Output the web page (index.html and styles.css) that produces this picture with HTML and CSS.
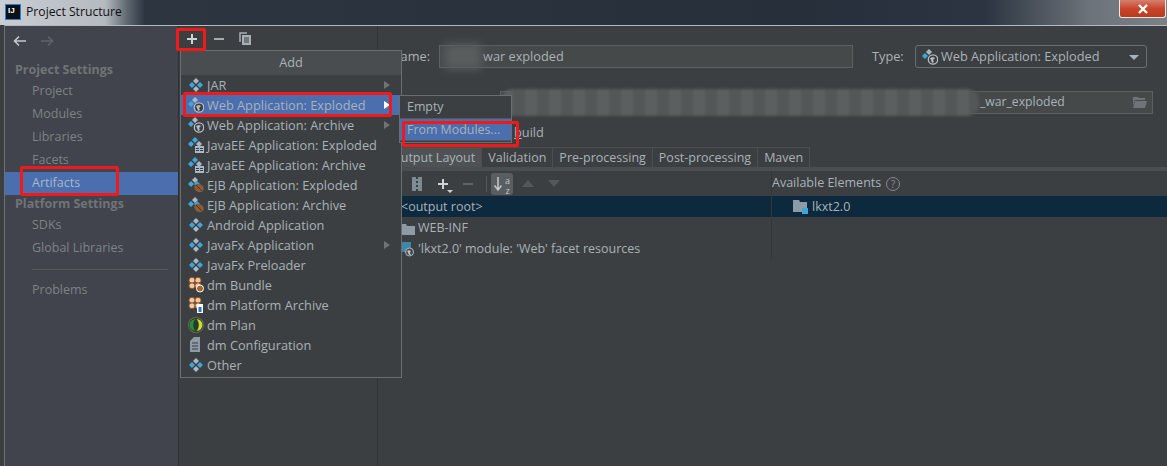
FILE: index.html
```html
<!DOCTYPE html>
<html lang="en">
<head>
<meta charset="utf-8">
<title>Project Structure</title>
<link rel="stylesheet" href="styles.css">
</head>
<body>
<svg class="defs" width="0" height="0" aria-hidden="true">
  <defs>
    <g id="dia">
      <path d="M8 1l3 3-3 3-3-3z" fill="#a9b7c6"/>
      <path d="M4 5l3 3-3 3-3-3z" fill="#3ea6d8"/>
      <path d="M12 5l3 3-3 3-3-3z" fill="#3ea6d8"/>
      <path d="M8 9l3 3-3 3-3-3z" fill="#a9b7c6"/>
    </g>
    <g id="web">
      <path d="M7 0l3 3-3 3-3-3z" fill="#a9b7c6"/>
      <path d="M3 4l3 3-3 3-3-3z" fill="#3ea6d8"/>
      <path d="M8 7l2 2-2 2-2-2z" fill="#3ea6d8"/>
      <circle cx="11" cy="10.500" r="4.700" fill="#3c3f41" stroke="#b5bcc2" stroke-width="1.300"/>
      <path d="M8 9l3-1 2 1-2 2 1 2-2 1-1-3z" fill="#b5bcc2"/>
    </g>
    <g id="ee">
      <path d="M7 0l3 3-3 3-3-3z" fill="#3ea6d8"/>
      <path d="M3 4l3 3-3 3-3-3z" fill="#3ea6d8"/>
      <path d="M11 4l3 3-3 3-3-3z" fill="#a9b7c6"/>
      <path d="M7 9h9v7H7z" fill="#a9b7c6"/>
      <path d="M8 11h3v1H8zM12 11h3v1h-3zM8 13h3v1H8zM12 13h3v1h-3z" fill="#3c3f41"/>
    </g>
    <g id="ejb">
      <path d="M7 0l3 3-3 3-3-3z" fill="#a9b7c6"/>
      <path d="M3 4l3 3-3 3-3-3z" fill="#3ea6d8"/>
      <path d="M9 4l3 3-3 3-3-3z" fill="#3ea6d8"/>
      <ellipse cx="11" cy="11" rx="5" ry="4" fill="#8a5a3a" transform="rotate(35 11 11)"/>
      <path d="M8 8l6 6" stroke="#4a3326" stroke-width="1"/>
    </g>
    <g id="waffle">
      <rect x="1" y="0.500" width="6" height="5.500" rx="2.500" fill="#efc9a4" stroke="#8c5128"/>
      <rect x="7" y="0.500" width="6" height="5.500" rx="2.500" fill="#efc9a4" stroke="#8c5128"/>
      <rect x="1" y="6" width="6" height="5.500" rx="2.500" fill="#efc9a4" stroke="#8c5128"/>
      <rect x="7" y="6" width="6" height="5.500" rx="2.500" fill="#efc9a4" stroke="#8c5128"/>
    </g>
    <g id="bundle">
      <use href="#waffle"/>
      <circle cx="12" cy="11.500" r="3.500" fill="#a5652f" stroke="#fff"/>
    </g>
    <g id="plat">
      <use href="#waffle"/>
      <path d="M9 7h6v9H9z" fill="#fff"/>
      <path d="M10.500 10h3v5h-3z" fill="#2f6fc4"/>
    </g>
    <g id="plan">
      <circle cx="8" cy="8" r="8" fill="#6b6a4a"/>
      <circle cx="8" cy="8" r="7" fill="#2a3a24"/>
      <path d="M8.500 2a6 6 0 0 1 0 12c3-3 3-9 0-12z" fill="#c6dc37"/>
      <path d="M7.500 2a6 6 0 0 0 0 12c-3-3-3-9 0-12z" fill="#1f9140"/>
    </g>
    <g id="doc">
      <path d="M2 4l4-4h6v15H2z" fill="#8c9ba6"/>
      <path d="M4 6h6M4 9h6M4 12h6" stroke="#3c3f41"/>
    </g>
  </defs>
</svg>

<div class="app">
  <header class="titlebar">
    <div class="title-glow">
      <span class="ij-logo">IJ</span>
      <span class="title-text">Project Structure</span>
    </div>
    <div class="close-btn">
      <svg width="12" height="10" viewBox="0 0 12 10"><path d="M2 1l8 8M10 1L2 9" stroke="#fff" stroke-width="2.400"/></svg>
    </div>
  </header>

  <div class="window">
    <aside class="sidebar">
      <div class="nav-arrows">
        <svg width="14" height="12" viewBox="0 0 14 12"><path d="M13 6H2M6 1.500L1.500 6 6 10.500" fill="none" stroke="#c3c7ca" stroke-width="1.600"/></svg>
        <svg width="14" height="12" viewBox="0 0 14 12"><path d="M1 6h11M8 1.500L12.500 6 8 10.500" fill="none" stroke="#5e6368" stroke-width="1.600"/></svg>
      </div>
      <div class="side-head first">Project Settings</div>
      <div class="side-item">Project</div>
      <div class="side-item">Modules</div>
      <div class="side-item">Libraries</div>
      <div class="side-item">Facets</div>
      <div class="side-item active">Artifacts</div>
      <div class="side-head">Platform Settings</div>
      <div class="side-item">SDKs</div>
      <div class="side-item">Global Libraries</div>
      <div class="side-sep"></div>
      <div class="side-item">Problems</div>
    </aside>

    <section class="mid">
      <div class="mid-tools">
        <svg class="tool-plus" width="12" height="12" viewBox="0 0 12 12"><path d="M6 1v10M1 6h10" stroke="#d0d3d5" stroke-width="2"/></svg>
        <svg class="tool-minus" width="12" height="12" viewBox="0 0 12 12"><path d="M1 6h10" stroke="#a8acaf" stroke-width="2"/></svg>
        <svg width="13" height="13" viewBox="0 0 13 13"><path d="M1 10V1h7" fill="none" stroke="#a8b0b6" stroke-width="1.500"/><path d="M3 3h9v10H3z" fill="#a8b0b6"/><path d="M5 6h5M5 8h5M5 10h5" stroke="#3c3f41"/></svg>
      </div>
    </section>

    <main class="main">
      <div class="name-row">
        <label class="lbl name-lbl">Name:</label>
        <div class="field name-field"><span class="blur-a"></span><span class="name-val">war exploded</span></div>
        <label class="lbl type-lbl">Type:</label>
        <div class="select">
          <svg width="16" height="16" viewBox="0 0 16 16"><use href="#web"/></svg>
          <span>Web Application: Exploded</span>
          <i class="caret"></i>
        </div>
      </div>
      <div class="dir-row">
        <div class="field dir-field">
          <span class="blur-b"></span>
          <span class="dir-val">_war_exploded</span>
          <svg class="folder-open" width="16" height="13" viewBox="0 0 16 13"><path d="M1 3V1h5l1 1h6v2H3L1 10z" fill="#6e7478"/><path d="M3 5h12l-2 7H1z" fill="#6e7478"/></svg>
        </div>
      </div>
      <div class="build-row"><u>b</u>uild</div>
      <nav class="tabs">
        <span class="tab on">Output Layout</span>
        <span class="tab">Validation</span>
        <span class="tab">Pre-processing</span>
        <span class="tab">Post-processing</span>
        <span class="tab">Maven</span>
      </nav>
      <div class="tab-rule"></div>
      <div class="layout">
        <div class="tree">
          <div class="tree-tools">
            <svg width="14" height="16" viewBox="0 0 14 16"><path d="M2 1h10v14H2z" fill="#7d8b94"/><path d="M6 1h2v2H6zM6 5h2v2H6zM6 9h2v2H6zM6 13h2v2H6z" fill="#3c3f41"/></svg>
            <span class="add-tool"><svg width="12" height="12" viewBox="0 0 12 12"><path d="M6 1v10M1 6h10" stroke="#d0d3d5" stroke-width="2"/></svg><i></i></span>
            <svg width="12" height="12" viewBox="0 0 12 12"><path d="M1 6h10" stroke="#5e6368" stroke-width="2"/></svg>
            <b class="tool-sep"></b>
            <span class="sort-btn">
              <svg width="22" height="22" viewBox="0 0 22 22"><path d="M7 4v13M3.500 12.500L7 17l3.500-4.500" fill="none" stroke="#c3c7ca" stroke-width="1.500"/></svg>
              <em class="az">az</em>
            </span>
            <i class="tri up"></i>
            <i class="tri down"></i>
          </div>
          <div class="tree-row sel"><span>&lt;output root&gt;</span></div>
          <div class="tree-row">
            <svg class="ic" width="14" height="12" viewBox="0 0 14 12"><path d="M0 1h5l1 2h8v9H0z" fill="#8c9ba6"/></svg>
            <span>WEB-INF</span>
          </div>
          <div class="tree-row">
            <svg class="ic" width="14" height="15" viewBox="0 0 14 15"><path d="M0 0h10v10H0z" fill="#3f87a8"/><circle cx="8.500" cy="10" r="4" fill="#3c3f41" stroke="#b5bcc2"/><path d="M6 9l2-1 2 1-1 2 1 2-2 0z" fill="#b5bcc2"/></svg>
            <span>'lkxt2.0' module: 'Web' facet resources</span>
          </div>
        </div>
        <div class="avail">
          <div class="avail-head">Available Elements <span class="help">?</span></div>
          <div class="avail-row sel">
            <svg width="16" height="15" viewBox="0 0 16 15"><path d="M0 0h6l1 2h7v10H0z" fill="#8c9ba6"/><path d="M9 8h6v6H9z" fill="#3ea6d8"/></svg>
            <span>lkxt2.0</span>
          </div>
        </div>
      </div>
    </main>
  </div>

  <div class="popup">
    <div class="pop-head">Add</div>
    <ul class="pop-list">
      <li><svg width="16" height="16" viewBox="0 0 16 16"><use href="#dia"/></svg><span>JAR</span><i class="arrow"></i></li>
      <li class="hot"><svg width="16" height="16" viewBox="0 0 16 16"><use href="#web"/></svg><span>Web Application: Exploded</span><i class="arrow"></i></li>
      <li><svg width="16" height="16" viewBox="0 0 16 16"><use href="#web"/></svg><span>Web Application: Archive</span><i class="arrow"></i></li>
      <li><svg width="16" height="16" viewBox="0 0 16 16"><use href="#ee"/></svg><span>JavaEE Application: Exploded</span></li>
      <li><svg width="16" height="16" viewBox="0 0 16 16"><use href="#ee"/></svg><span>JavaEE Application: Archive</span></li>
      <li><svg width="16" height="16" viewBox="0 0 16 16"><use href="#ejb"/></svg><span>EJB Application: Exploded</span></li>
      <li><svg width="16" height="16" viewBox="0 0 16 16"><use href="#ejb"/></svg><span>EJB Application: Archive</span></li>
      <li><svg width="16" height="16" viewBox="0 0 16 16"><use href="#dia"/></svg><span>Android Application</span></li>
      <li><svg width="16" height="16" viewBox="0 0 16 16"><use href="#dia"/></svg><span>JavaFx Application</span><i class="arrow"></i></li>
      <li><svg width="16" height="16" viewBox="0 0 16 16"><use href="#dia"/></svg><span>JavaFx Preloader</span></li>
      <li><svg width="16" height="16" viewBox="0 0 16 16"><use href="#bundle"/></svg><span>dm Bundle</span></li>
      <li><svg width="16" height="16" viewBox="0 0 16 16"><use href="#plat"/></svg><span>dm Platform Archive</span></li>
      <li><svg width="16" height="16" viewBox="0 0 16 16"><use href="#plan"/></svg><span>dm Plan</span></li>
      <li><svg width="16" height="16" viewBox="0 0 16 16"><use href="#doc"/></svg><span>dm Configuration</span></li>
      <li><svg width="16" height="16" viewBox="0 0 16 16"><use href="#dia"/></svg><span>Other</span></li>
    </ul>
  </div>

  <div class="submenu">
    <div class="sub-item">Empty</div>
    <div class="sub-item hot">From Modules...</div>
  </div>

  <span class="mark mark-plus"></span>
  <span class="mark mark-art"></span>
  <span class="mark mark-web"></span>
  <span class="mark mark-mod"></span>
</div>
</body>
</html>
```
FILE: styles.css
```css
* { box-sizing: border-box; }
html, body { margin: 0; height: 100%; }
body {
  background: #3c3f41;
  color: #a9b2b8;
  font: 12.750px/1 "Open Sans", "Noto Sans", sans-serif;
  overflow: hidden;
}
.defs { position: absolute; }
.app { position: relative; width: 1167px; height: 466px; display: flex; flex-direction: column; }

.titlebar {
  height: 25px;
  flex: none;
  display: flex;
  justify-content: space-between;
  background: linear-gradient(90deg, #c9ced3 0, #b4bac0 105px, #5c646c 128px, #2c3540 145px, #262f3a 800px, #2b3440 985px, #6d737a 1090px, #7b8187 100%);
}
.title-glow { display: flex; align-items: center; gap: 5px; padding-left: 5px; height: 24px; }
.ij-logo {
  width: 16px; height: 16px;
  background: #0d1117;
  color: #fff;
  font: bold 8px/11px "Liberation Sans", sans-serif;
  padding-left: 2px;
  border: 1px solid #2b7fd0;
  display: block;
}
.title-text { color: #111; font-size: 12.200px; }
.close-btn {
  width: 47px; height: 18px;
  margin-right: 1px;
  display: flex; align-items: center; justify-content: center;
  background: linear-gradient(#d4806f 0, #c9452b 50%, #b93a20 100%);
  border: 1px solid #f0e6e2;
  border-top: 0;
  border-radius: 0 0 3px 3px;
}

.window {
  flex: 1;
  display: flex;
  margin-left: 4px;
  border-top: 1px solid #b5b9bc;
  border-left: 1px solid #6f7275;
  min-height: 0;
}
.sidebar { width: 174px; flex: none; background: #41444c; border-right: 1px solid #2f3133; font-size: 12.500px; }
.nav-arrows { display: flex; gap: 13px; padding: 9px 0 0 8px; height: 35px; }
.side-head { font-weight: 700; color: #6f7478; height: 19px; padding: 3px 0 0 10px; font-size: 12.500px; }
.side-item { height: 23px; padding: 5px 0 0 27px; color: #7d8286; }
.side-item.active { background: #4b6eaf; color: #a9b7c6; }
.side-sep { height: 1px; margin: 9px 10px 9px 27px; background: #55585b; }

.mid { width: 199px; flex: none; background: #3c3f41; border-right: 1px solid #333537; }
.mid-tools { display: flex; align-items: center; height: 25px; padding-left: 7px; }
.tool-minus { margin-left: 15px; margin-right: 14px; }

.main { flex: 1; min-width: 0; padding-top: 19px; }
.lbl { color: #a9b2b8; }
.name-row { display: flex; align-items: center; height: 23px; padding-left: 13px; }
.name-lbl { width: 48px; }
.field { position: relative; background: #45494a; border: 1px solid #5d6062; height: 23px; display: flex; align-items: center; }
.name-field { width: 414px; padding-left: 43px; }
.name-val { color: #a9b2b8; }
.blur-a { position: absolute; left: 5px; top: -2px; width: 36px; height: 25px; background: #5a5d5f; filter: blur(5px); }
.type-lbl { margin-left: 19px; width: 43px; }
.select {
  width: 232px; height: 23px;
  border: 1px solid #6a6e70; border-radius: 3px;
  display: flex; align-items: center; gap: 3px; padding-left: 6px;
  position: relative;
}
.caret { position: absolute; right: 7px; top: 9px; border: 5px solid transparent; border-top: 5px solid #a9b2b8; border-bottom: 0; }

.dir-row { display: flex; align-items: center; height: 23px; margin-top: 23px; padding-left: 122px; }
.dir-field { width: 653px; padding-left: 479px; }
.dir-val { font-size: 12.200px; }
.blur-b { position: absolute; left: 0; top: -3px; width: 478px; height: 27px; border-radius: 12px; background: repeating-linear-gradient(90deg, #5c5f60 0 12px, #545758 12px 24px); filter: blur(1.500px); }
.folder-open { position: absolute; right: 4px; top: 4px; }

.build-row { height: 18px; margin-top: 9px; padding: 3px 0 0 136px; color: #a9b2b8; }

.tabs { display: flex; height: 20px; margin-top: 6px; padding-left: 6px; font-size: 12.500px; }
.tab { padding: 4px 6px 0; border: 1px solid #4b4e50; border-bottom: 0; margin-right: -1px; color: #a9b2b8; }
.tab.on { background: #4e5254; }
.tab-rule { height: 4px; background: #4b4e50; }

.layout { display: flex; }
.tree { width: 393px; flex: none; font-size: 12.500px; }
.tree-tools { position: relative; height: 25px; display: flex; align-items: center; gap: 13px; padding-left: 32px; }
.add-tool { position: relative; display: block; height: 12px; }
.add-tool i { position: absolute; right: -4px; bottom: -3px; border: 3px solid transparent; border-top: 3px solid #d0d3d5; border-bottom: 0; }
.tool-sep { width: 1px; height: 16px; background: #55585b; margin-left: -1px; margin-right: -9px; }
.sort-btn { position: relative; display: block; width: 22px; height: 22px; background: #5a5e60; border-radius: 3px; }
.az { position: absolute; left: 12px; top: 1px; font: normal 9px/9px "Open Sans", sans-serif; color: #c3c7ca; writing-mode: vertical-lr; text-orientation: upright; letter-spacing: -3px; }
.tri { display: block; border: 6px solid transparent; }
.tri.up { border-bottom: 7px solid #55585b; border-top: 0; margin-left: -4px; }
.tri.down { border-top: 7px solid #55585b; border-bottom: 0; margin-left: 1px; }
.tree-row { height: 21px; display: flex; align-items: center; gap: 3px; padding: 2px 0 0 23px; }
.tree-row.sel { background: #0d293e; }
.avail { flex: 1; border-left: 1px solid #333537; font-size: 12.500px; }
.avail-head { height: 25px; display: flex; align-items: center; gap: 5px; color: #a9b2b8; }
.help { width: 14px; height: 14px; border: 1px solid #85898c; border-radius: 50%; font-size: 10px; line-height: 12px; text-align: center; color: #85898c; }
.avail-row { height: 21px; display: flex; align-items: center; gap: 3px; padding: 2px 0 0 21px; background: #0d293e; }

.popup {
  position: absolute; left: 180px; top: 50px;
  width: 222px; height: 328px;
  background: #3c3f41;
  border: 1px solid #6b6e70;
}
.pop-head { height: 24px; background: #4a4d4f; text-align: center; line-height: 23px; color: #a9b2b8; }
.pop-list { list-style: none; margin: 0; padding: 0; }
.pop-list li { position: relative; height: 20px; display: flex; align-items: center; gap: 3px; padding-left: 7px; color: #a9b2b8; }
.pop-list li.hot { background: #4b6eaf; }
.arrow { position: absolute; right: 11px; top: 6px; border: 4px solid transparent; border-left: 6px solid #6f7376; border-right: 0; }
.hot .arrow { border-left-color: #fff; }

.submenu {
  position: absolute; left: 399px; top: 95px;
  width: 113px; height: 48px;
  background: #3c3f41;
  border: 1px solid #6b6e70;
  font-size: 12.400px;
}
.sub-item { height: 23px; padding: 5px 0 0 7px; color: #a9b2b8; border-bottom: 1px solid #55585b; }
.sub-item.hot { background: #4b6eaf; height: 22px; }

.mark { position: absolute; border: 3px solid #f01a1a; border-radius: 2px; }
.mark-plus { left: 176px; top: 28px; width: 30px; height: 23px; }
.mark-art { left: 20px; top: 166px; width: 99px; height: 30px; }
.mark-web { left: 183px; top: 92px; width: 209px; height: 25px; }
.mark-mod { left: 402px; top: 121px; width: 117px; height: 26px; }
```
